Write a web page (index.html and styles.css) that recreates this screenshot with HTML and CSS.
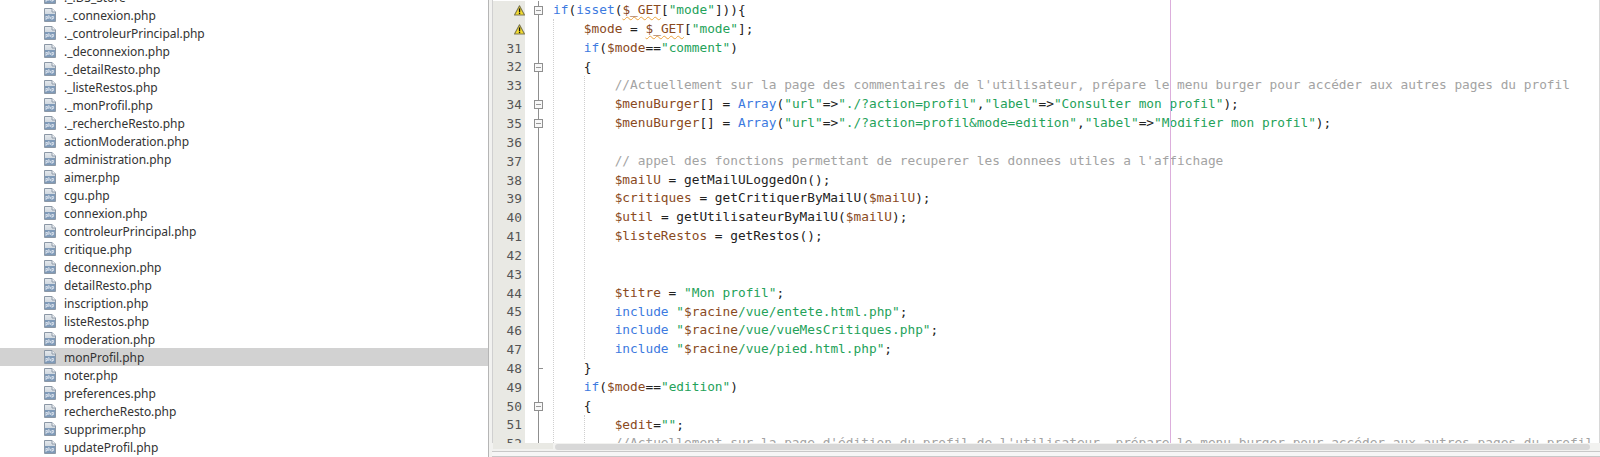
FILE: index.html
```html
<!DOCTYPE html>
<html lang="fr">
<head>
<meta charset="utf-8">
<title>monProfil.php</title>
<link rel="stylesheet" href="styles.css">
</head>
<body>
<svg class="defs" width="0" height="0" aria-hidden="true">
  <defs>
    <linearGradient id="pg" x1="0" y1="0" x2="0" y2="1"><stop offset="0" stop-color="#e6eaee"/><stop offset="1" stop-color="#b4c0cc"/></linearGradient>
    <symbol id="php" viewBox="0 0 12 14">
      <path d="M.5.5H8L11.5 4V13.5H.5Z" fill="url(#pg)" stroke="#8c98a6"/>
      <path d="M8 .5V4H11.5" fill="#f1f3f6" stroke="#8c98a6"/>
      <rect x="1" y="6" width="10" height="7" fill="#7f9ab8"/>
      <path d="M2 8v4M2 8.5h1.6v2H2M4.8 7v4M4.8 9h1.6v2M8 8v4M8 8.5h1.6v2H8" fill="none" stroke="#e3e9f0" stroke-width=".8"/>
    </symbol>
    <symbol id="warn" viewBox="0 0 11 11">
      <path d="M5.5 .8 10.5 10H.5Z" fill="#f4dc2e" stroke="#7d7850" stroke-width="1.1" stroke-linejoin="round"/>
      <rect x="4.9" y="3.4" width="1.3" height="3.8" fill="#111"/>
      <rect x="4.9" y="7.8" width="1.3" height="1.3" fill="#111"/>
    </symbol>
  </defs>
</svg>
<div class="app">
  <aside class="tree">
    <ul class="files">
      <li class="file"><svg class="ficon"><use href="#php"/></svg>._.DS_Store</li>
      <li class="file"><svg class="ficon"><use href="#php"/></svg>._connexion.php</li>
      <li class="file"><svg class="ficon"><use href="#php"/></svg>._controleurPrincipal.php</li>
      <li class="file"><svg class="ficon"><use href="#php"/></svg>._deconnexion.php</li>
      <li class="file"><svg class="ficon"><use href="#php"/></svg>._detailResto.php</li>
      <li class="file"><svg class="ficon"><use href="#php"/></svg>._listeRestos.php</li>
      <li class="file"><svg class="ficon"><use href="#php"/></svg>._monProfil.php</li>
      <li class="file"><svg class="ficon"><use href="#php"/></svg>._rechercheResto.php</li>
      <li class="file"><svg class="ficon"><use href="#php"/></svg>actionModeration.php</li>
      <li class="file"><svg class="ficon"><use href="#php"/></svg>administration.php</li>
      <li class="file"><svg class="ficon"><use href="#php"/></svg>aimer.php</li>
      <li class="file"><svg class="ficon"><use href="#php"/></svg>cgu.php</li>
      <li class="file"><svg class="ficon"><use href="#php"/></svg>connexion.php</li>
      <li class="file"><svg class="ficon"><use href="#php"/></svg>controleurPrincipal.php</li>
      <li class="file"><svg class="ficon"><use href="#php"/></svg>critique.php</li>
      <li class="file"><svg class="ficon"><use href="#php"/></svg>deconnexion.php</li>
      <li class="file"><svg class="ficon"><use href="#php"/></svg>detailResto.php</li>
      <li class="file"><svg class="ficon"><use href="#php"/></svg>inscription.php</li>
      <li class="file"><svg class="ficon"><use href="#php"/></svg>listeRestos.php</li>
      <li class="file"><svg class="ficon"><use href="#php"/></svg>moderation.php</li>
      <li class="file active"><svg class="ficon"><use href="#php"/></svg>monProfil.php</li>
      <li class="file"><svg class="ficon"><use href="#php"/></svg>noter.php</li>
      <li class="file"><svg class="ficon"><use href="#php"/></svg>preferences.php</li>
      <li class="file"><svg class="ficon"><use href="#php"/></svg>rechercheResto.php</li>
      <li class="file"><svg class="ficon"><use href="#php"/></svg>supprimer.php</li>
      <li class="file"><svg class="ficon"><use href="#php"/></svg>updateProfil.php</li>
    </ul>
  </aside>
  <main class="editor">
    <div class="pane">
      <div class="lines">
        <div class="row"><span class="num"><svg class="warn"><use href="#warn"/></svg></span><span class="fold box"></span><code class="src"><b>if</b>(<b>isset</b>(<i class="w">$_GET</i>[<s>"mode"</s>])){</code></div>
        <div class="row"><span class="num"><svg class="warn"><use href="#warn"/></svg></span><span class="fold"></span><code class="src">    <i>$mode</i> = <i class="w">$_GET</i>[<s>"mode"</s>];</code></div>
        <div class="row"><span class="num">31</span><span class="fold"></span><code class="src">    <b>if</b>(<i>$mode</i>==<s>"comment"</s>)</code></div>
        <div class="row"><span class="num">32</span><span class="fold box"></span><code class="src">    {</code></div>
        <div class="row"><span class="num">33</span><span class="fold"></span><code class="src">        <em>//Actuellement sur la page des commentaires de l'utilisateur, prépare le menu burger pour accéder aux autres pages du profil</em></code></div>
        <div class="row"><span class="num">34</span><span class="fold box"></span><code class="src">        <i>$menuBurger</i>[] = <b>Array</b>(<s>"url"</s>=&gt;<s>"./?action=profil"</s>,<s>"label"</s>=&gt;<s>"Consulter mon profil"</s>);</code></div>
        <div class="row"><span class="num">35</span><span class="fold box"></span><code class="src">        <i>$menuBurger</i>[] = <b>Array</b>(<s>"url"</s>=&gt;<s>"./?action=profil&amp;mode=edition"</s>,<s>"label"</s>=&gt;<s>"Modifier mon profil"</s>);</code></div>
        <div class="row"><span class="num">36</span><span class="fold"></span><code class="src"></code></div>
        <div class="row"><span class="num">37</span><span class="fold"></span><code class="src">        <em>// appel des fonctions permettant de recuperer les donnees utiles a l'affichage</em></code></div>
        <div class="row"><span class="num">38</span><span class="fold"></span><code class="src">        <i>$mailU</i> = getMailULoggedOn();</code></div>
        <div class="row"><span class="num">39</span><span class="fold"></span><code class="src">        <i>$critiques</i> = getCritiquerByMailU(<i>$mailU</i>);</code></div>
        <div class="row"><span class="num">40</span><span class="fold"></span><code class="src">        <i>$util</i> = getUtilisateurByMailU(<i>$mailU</i>);</code></div>
        <div class="row"><span class="num">41</span><span class="fold"></span><code class="src">        <i>$listeRestos</i> = getRestos();</code></div>
        <div class="row"><span class="num">42</span><span class="fold"></span><code class="src"></code></div>
        <div class="row"><span class="num">43</span><span class="fold"></span><code class="src"></code></div>
        <div class="row"><span class="num">44</span><span class="fold"></span><code class="src">        <i>$titre</i> = <s>"Mon profil"</s>;</code></div>
        <div class="row"><span class="num">45</span><span class="fold"></span><code class="src">        <b>include</b> <s>"<i>$racine</i>/vue/entete.html.php"</s>;</code></div>
        <div class="row"><span class="num">46</span><span class="fold"></span><code class="src">        <b>include</b> <s>"<i>$racine</i>/vue/vueMesCritiques.php"</s>;</code></div>
        <div class="row"><span class="num">47</span><span class="fold"></span><code class="src">        <b>include</b> <s>"<i>$racine</i>/vue/pied.html.php"</s>;</code></div>
        <div class="row"><span class="num">48</span><span class="fold tick"></span><code class="src">    }</code></div>
        <div class="row"><span class="num">49</span><span class="fold"></span><code class="src">    <b>if</b>(<i>$mode</i>==<s>"edition"</s>)</code></div>
        <div class="row"><span class="num">50</span><span class="fold box"></span><code class="src">    {</code></div>
        <div class="row"><span class="num">51</span><span class="fold"></span><code class="src">        <i>$edit</i>=<s>""</s>;</code></div>
        <div class="row"><span class="num">52</span><span class="fold"></span><code class="src">        <em>//Actuellement sur la page d'édition du profil de l'utilisateur, prépare le menu burger pour accéder aux autres pages du profil</em></code></div>
      </div>
      <span class="guide g1"></span>
      <span class="guide g2"></span>
      <span class="guide g3"></span>
      <span class="margin"></span>
    </div>
    <div class="hbar"><span class="corner"></span><span class="thumb"></span></div>
    <div class="status"></div>
  </main>
</div>
</body>
</html>
```
FILE: styles.css
```css
html, body {
  margin: 0;
  height: 100%;
  overflow: hidden;
  background: #fff;
}
.defs {
  position: absolute;
}
.app {
  display: flex;
  height: 457px;
}
.tree {
  width: 489px;
  flex: none;
  overflow: hidden;
  box-sizing: border-box;
  border-right: 1px solid #b5b5b5;
}
.files {
  list-style: none;
  margin: -12px 0 0;
  padding: 0;
}
.file {
  display: flex;
  align-items: flex-start;
  box-sizing: border-box;
  height: 18px;
  padding: 1px 0 0 44px;
  font: 12px/18px "Noto Sans", sans-serif;
  letter-spacing: -0.04px;
  color: #333;
  white-space: nowrap;
}
.file.active {
  background: #d2d2d2;
}
.ficon {
  width: 12px;
  height: 14px;
  margin: 1px 8px 0 0;
  flex: none;
}
.editor {
  flex: 1;
  min-width: 0;
  display: flex;
  flex-direction: column;
  padding-left: 3px;
  background: #f2f2f0;
}
.pane {
  position: relative;
  height: 443px;
  overflow: hidden;
  background: #fff;
  border-left: 1px solid #d0d0d0;
  border-right: 1px solid #d8d8d8;
}
.lines {
  padding-top: 1px;
}
.row {
  display: flex;
  height: 18.85px;
}
.num {
  width: 32px;
  flex: none;
  box-sizing: border-box;
  padding-right: 3px;
  background: #e9e9e4;
  display: flex;
  justify-content: flex-end;
  align-items: center;
  font: 12.8px "DejaVu Sans Mono", monospace;
  color: #555;
}
.warn {
  width: 11px;
  height: 11px;
  margin-right: -3px;
}
.fold {
  position: relative;
  width: 28px;
  flex: none;
}
.fold::before {
  content: "";
  position: absolute;
  left: 13px;
  top: 0;
  bottom: -1px;
  width: 1px;
  background: #8f8f8f;
}
.fold.box::after {
  content: "";
  position: absolute;
  left: 9px;
  top: 5px;
  width: 7px;
  height: 7px;
  border: 1px solid #8f8f8f;
  background: linear-gradient(#999, #999) center / 5px 1px no-repeat #f8f8f8;
}
.fold.tick::after {
  content: "";
  position: absolute;
  left: 13px;
  top: 9px;
  width: 5px;
  height: 1px;
  background: #8f8f8f;
}
.src {
  flex: 1;
  min-width: 0;
  white-space: pre;
  font: 12.8px/18.85px "DejaVu Sans Mono", monospace;
  color: #222;
}
.src b {
  font-weight: normal;
  color: #3d7ae0;
}
.src i {
  font-style: normal;
  color: #8a4a1e;
}
.src s {
  text-decoration: none;
  color: #24a25a;
}
.src em {
  font-style: normal;
  color: #a3a3a3;
}
.src .w {
  text-decoration: underline wavy #eda33c 1px;
  text-underline-offset: 2px;
}
.guide {
  position: absolute;
  width: 0;
  border-left: 1px dotted #cfcfcf;
}
.g1 {
  left: 60px;
  top: 19px;
  bottom: 0;
}
.g2 {
  left: 91px;
  top: 76px;
  height: 283px;
}
.g3 {
  left: 91px;
  top: 415px;
  bottom: 0;
}
.margin {
  position: absolute;
  left: 677px;
  top: 0;
  bottom: 0;
  width: 1px;
  background: #dcaedc;
}
.hbar {
  display: flex;
  height: 8px;
  flex: none;
  padding-left: 1px;
  background: #f2f2f0;
}
.corner {
  width: 60px;
  flex: none;
  background: #e9e9e4;
  margin-bottom: 2px;
}
.thumb {
  width: 1035px;
  margin: 1px 0 1px 2px;
  background: #d8d8d8;
  border-radius: 3px;
}
.status {
  flex: 1;
  border-top: 1px solid #c8c8c8;
  border-bottom: 1px solid #c8c8c8;
  background: #f6f6f6;
}
```
